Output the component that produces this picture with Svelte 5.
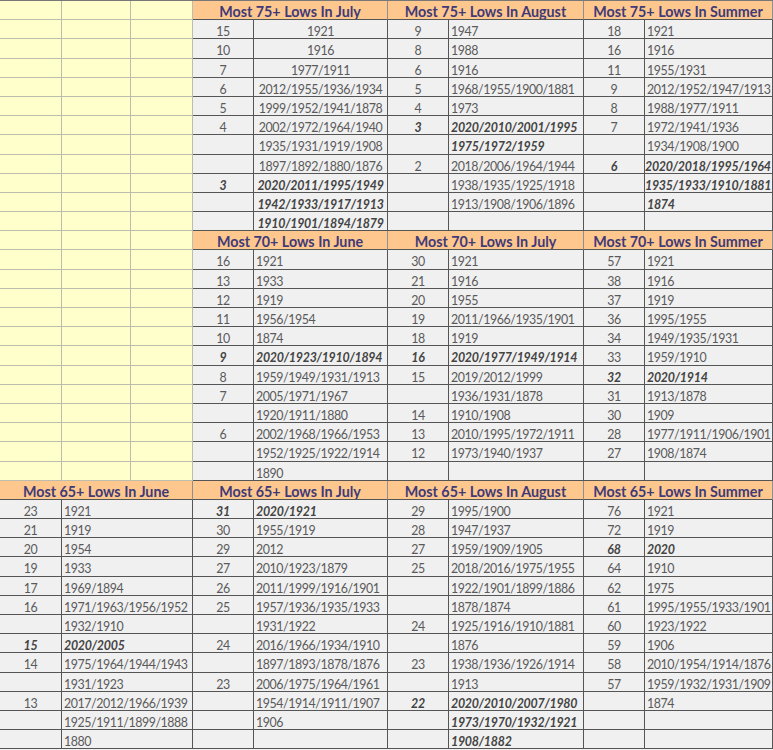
<script>
  // [count, years, bold] - count left out on continuation rows
  const sections = [
    {
      blank: 3,
      heads: ["Most 75+ Lows In July", "Most 75+ Lows In August", "Most 75+ Lows In Summer"],
      centered: [true, false, false],
      cols: [
        [
          ["15", "1921"], ["10", "1916"], ["7", "1977/1911"], ["6", "2012/1955/1936/1934"],
          ["5", "1999/1952/1941/1878"], ["4", "2002/1972/1964/1940"], ["", "1935/1931/1919/1908"],
          ["", "1897/1892/1880/1876"], ["3", "2020/2011/1995/1949", 1], ["", "1942/1933/1917/1913", 1],
          ["", "1910/1901/1894/1879", 1]
        ],
        [
          ["9", "1947"], ["8", "1988"], ["6", "1916"], ["5", "1968/1955/1900/1881"], ["4", "1973"],
          ["3", "2020/2010/2001/1995", 1], ["", "1975/1972/1959", 1], ["2", "2018/2006/1964/1944"],
          ["", "1938/1935/1925/1918"], ["", "1913/1908/1906/1896"], ["", ""]
        ],
        [
          ["18", "1921"], ["16", "1916"], ["11", "1955/1931"], ["9", "2012/1952/1947/1913"],
          ["8", "1988/1977/1911"], ["7", "1972/1941/1936"], ["", "1934/1908/1900"],
          ["6", "2020/2018/1995/1964", 1], ["", "1935/1933/1910/1881", 1], ["", "1874", 1], ["", ""]
        ]
      ]
    },
    {
      blank: 3,
      heads: ["Most 70+ Lows In June", "Most 70+ Lows In July", "Most 70+ Lows In Summer"],
      centered: [false, false, false],
      cols: [
        [
          ["16", "1921"], ["13", "1933"], ["12", "1919"], ["11", "1956/1954"], ["10", "1874"],
          ["9", "2020/1923/1910/1894", 1], ["8", "1959/1949/1931/1913"], ["7", "2005/1971/1967"],
          ["", "1920/1911/1880"], ["6", "2002/1968/1966/1953"], ["", "1952/1925/1922/1914"], ["", "1890"]
        ],
        [
          ["30", "1921"], ["21", "1916"], ["20", "1955"], ["19", "2011/1966/1935/1901"], ["18", "1919"],
          ["16", "2020/1977/1949/1914", 1], ["15", "2019/2012/1999"], ["", "1936/1931/1878"],
          ["14", "1910/1908"], ["13", "2010/1995/1972/1911"], ["12", "1973/1940/1937"], ["", ""]
        ],
        [
          ["57", "1921"], ["38", "1916"], ["37", "1919"], ["36", "1995/1955"], ["34", "1949/1935/1931"],
          ["33", "1959/1910"], ["32", "2020/1914", 1], ["31", "1913/1878"], ["30", "1909"],
          ["28", "1977/1911/1906/1901"], ["27", "1908/1874"], ["", ""]
        ]
      ]
    },
    {
      blank: 0,
      heads: ["Most 65+ Lows In June", "Most 65+ Lows In July", "Most 65+ Lows In August", "Most 65+ Lows In Summer"],
      centered: [false, false, false, false],
      cols: [
        [
          ["23", "1921"], ["21", "1919"], ["20", "1954"], ["19", "1933"], ["17", "1969/1894"],
          ["16", "1971/1963/1956/1952"], ["", "1932/1910"], ["15", "2020/2005", 1],
          ["14", "1975/1964/1944/1943"], ["", "1931/1923"], ["13", "2017/2012/1966/1939"],
          ["", "1925/1911/1899/1888"], ["", "1880"]
        ],
        [
          ["31", "2020/1921", 1], ["30", "1955/1919"], ["29", "2012"], ["27", "2010/1923/1879"],
          ["26", "2011/1999/1916/1901"], ["25", "1957/1936/1935/1933"], ["", "1931/1922"],
          ["24", "2016/1966/1934/1910"], ["", "1897/1893/1878/1876"], ["23", "2006/1975/1964/1961"],
          ["", "1954/1914/1911/1907"], ["", "1906"], ["", ""]
        ],
        [
          ["29", "1995/1900"], ["28", "1947/1937"], ["27", "1959/1909/1905"], ["25", "2018/2016/1975/1955"],
          ["", "1922/1901/1899/1886"], ["", "1878/1874"], ["24", "1925/1916/1910/1881"], ["", "1876"],
          ["23", "1938/1936/1926/1914"], ["", "1913"], ["22", "2020/2010/2007/1980", 1],
          ["", "1973/1970/1932/1921", 1], ["", "1908/1882", 1]
        ],
        [
          ["76", "1921"], ["72", "1919"], ["68", "2020", 1], ["64", "1910"], ["62", "1975"],
          ["61", "1995/1955/1933/1901"], ["60", "1923/1922"], ["59", "1906"],
          ["58", "2010/1954/1914/1876"], ["57", "1959/1932/1931/1909"], ["", "1874"], ["", ""], ["", ""]
        ]
      ]
    }
  ];

  const rowsOf = (s) => s.cols[0].map((_, i) => s.cols.map((c) => c[i]));
</script>

<div class="sheet">
  {#each sections as s}
    {#each Array(s.blank) as _}<div class="blank"></div>{/each}
    {#each s.heads as h, i}
      <div class="head" class:wide={!s.blank && i === 0}>{h}</div>
    {/each}
    {#each rowsOf(s) as row}
      {#each Array(s.blank) as _}<div class="blank"></div>{/each}
      {#each row as cell, i}
        <div class="num" class:bold={cell[2]}>{cell[0]}</div>
        <div
          class="yrs"
          class:bold={cell[2]}
          class:wide={!s.blank && i === 0}
          class:mid={s.centered[i]}
          class:tight={cell[2] && i === row.length - 1 && cell[1].length > 15}
        >{cell[1]}</div>
      {/each}
    {/each}
  {/each}
</div>

<style>
  :global(body) {
    background: #f0f0f0;
  }

  .sheet {
    display: grid;
    width: 773px;
    grid-template-columns: 62px 69px 62px 61px 134px 61px 135px 61px 128px;
    grid-auto-rows: 19.2px;
    border-top: 1px solid #777;
    font-family: Lato, "Liberation Sans", sans-serif;
    font-size: 12.4px;
    letter-spacing: -0.43px;
    color: #5a5a5a;
  }

  .sheet > div {
    box-sizing: border-box;
    line-height: 23px;
    white-space: nowrap;
    overflow: hidden;
  }

  .blank {
    background: #ffffcc;
    border-right: 1px solid #bdbdae;
    border-bottom: 1px solid #bdbdae;
  }

  .sheet > .head {
    grid-column: span 2;
    background: #fec78e;
    color: #3f3a78;
    font-size: 14.3px;
    font-weight: 700;
    line-height: 21px;
    letter-spacing: 0;
    text-align: center;
    border-right: 1px solid #8f8f8f;
    border-bottom: 1px solid #555;
  }

  .sheet > .head.wide {
    grid-column: span 3;
  }

  .num {
    background: #f0f0f0;
    text-align: center;
    border-right: 1px solid #555;
    border-bottom: 1px solid #555;
  }

  .yrs {
    background: #f0f0f0;
    padding-left: 2px;
    border-right: 1px solid #555;
    border-bottom: 1px solid #555;
  }

  .yrs.wide {
    grid-column: span 2;
  }

  .yrs.mid {
    text-align: center;
    padding-left: 0;
  }

  .yrs.tight {
    padding-left: 0;
  }

  .bold {
    font-weight: 700;
    font-style: italic;
    letter-spacing: -0.25px;
    color: #444;
  }
</style>
